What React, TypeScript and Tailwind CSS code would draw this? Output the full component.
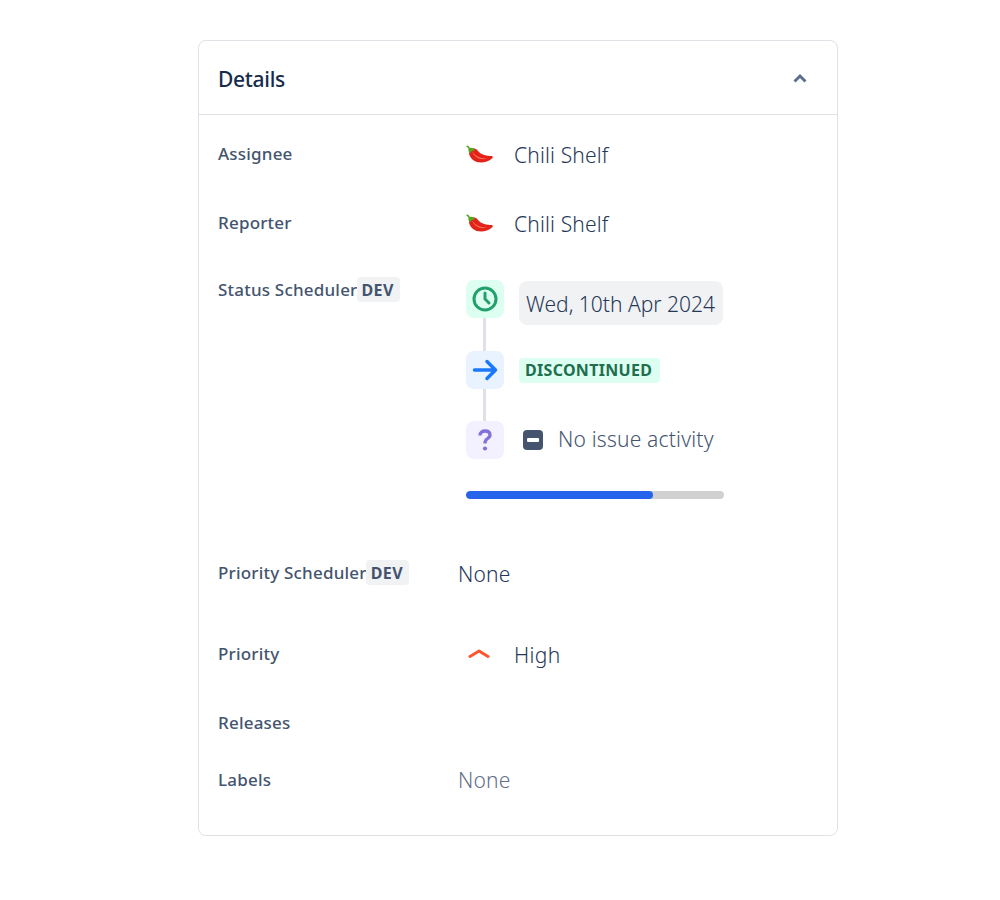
import React from "react";

const font = "font-['Noto_Sans',sans-serif]";

function Chili() {
  return (
    <svg width="30" height="24" viewBox="0 0 30 24" fill="none" className="-mt-[2px]">
      <path d="M5 8 C7 4 12 5 14 8 C17 12 23 13 28 13 C29 13.500 29 14.500 28 15.500 C23 20 14 21 9 17 C6 14.500 4.500 11 5 8 Z" fill="#e2231a" />
      <path d="M8 8 C10 12 15 15.500 23 15.500 C17 17.500 10 15 8 8 Z" fill="#fb6a50" />
      <path d="M2 3 L4 2.500 L6 5 C8 4.500 10 5.500 11 7.500 C9 7 7 8 6 10.500 C4.500 9 4 7 4.500 5.500 Z" fill="#5aa51f" />
    </svg>
  );
}

function Label({ children, dev }: { children: string; dev?: boolean }) {
  return (
    <div className="w-[240px] shrink-0 flex items-start text-[17px] leading-[24px] font-medium text-[#44546f] tracking-[0.2px]">
      <span>{children}</span>
      {dev && (
        <span className="bg-[#f1f2f4] rounded-[4px] pl-[5px] pr-[6px] h-[25px] -mt-[1px] -ml-[1px] flex items-center text-[16px] tracking-[0.4px] font-bold">
          DEV
        </span>
      )}
    </div>
  );
}

function IconBox({ bg, children }: { bg: string; children: React.ReactNode }) {
  return (
    <div className={`w-[38px] h-[38px] rounded-[8px] flex items-center justify-center shrink-0 ${bg}`}>
      {children}
    </div>
  );
}

function Person() {
  return (
    <div className="flex items-center h-[28px] pl-[6px] gap-[20px] text-[21px] font-light text-[#253858] tracking-[0.15px]">
      <Chili />
      <span>Chili Shelf</span>
    </div>
  );
}

export default function App() {
  return (
    <div className={`pt-10 pl-[198px] ${font}`}>
      <div className="w-[640px] h-[796px] border border-[#dfe1e6] rounded-[8px] bg-white">
        <div className="h-[74px] border-b border-[#dfe1e6] flex items-center justify-between pl-[19px] pr-[29px]">
          <h2 className="text-[21px] font-medium text-[#172b4d] tracking-[-0.3px] mt-[4px]">Details</h2>
          <svg width="16" height="16" viewBox="0 0 16 16" fill="none" className="mt-[3px]">
            <path d="M2.500 10.500 L8 5 L13.500 10.500" stroke="#5c6f8f" strokeWidth="3" />
          </svg>
        </div>

        <div className="pl-[19px]">
          <div className="flex pt-[27px] h-[69px]">
            <Label>Assignee</Label>
            <Person />
          </div>
          <div className="flex pt-[27px] h-[69px]">
            <Label>Reporter</Label>
            <Person />
          </div>

          <div className="flex pt-[25px] h-[307px]">
            <Label dev>Status Scheduler</Label>
            <div className="w-[266px] pl-[8px] pt-[2px]">
              <div className="flex items-center h-[38px]">
                <IconBox bg="bg-[#dcfff1]">
                  <svg width="28" height="28" viewBox="0 0 28 28" fill="none" stroke="#22a06b" strokeWidth="3" strokeLinecap="round">
                    <circle cx="14" cy="14" r="11" />
                    <path d="M14 8 V14 L18 18" />
                  </svg>
                </IconBox>
                <span className="ml-[15px] mt-[8px] h-[44px] flex items-center pt-[3px] pl-[7px] pr-[8px] rounded-[8px] bg-[#f1f2f4] text-[21px] font-light text-[#253858] whitespace-nowrap">
                  Wed, 10th Apr 2024
                </span>
              </div>
              <div className="w-[3px] h-[33px] bg-[#dfe1e6] ml-[17px]" />
              <div className="flex items-center h-[38px]">
                <IconBox bg="bg-[#e9f2ff]">
                  <svg width="26" height="26" viewBox="0 0 26 26" fill="none" stroke="#1a78fb" strokeWidth="3.500" strokeLinecap="round" strokeLinejoin="round">
                    <path d="M2.500 13 H23 M15 4.500 L23.500 13 L15 21.500" />
                  </svg>
                </IconBox>
                <span className="ml-[15px] h-[25px] flex items-center pl-[6px] pr-[8px] rounded-[4px] bg-[#dcfff1] text-[16px] font-bold text-[#216e4e] tracking-[0.3px]">
                  DISCONTINUED
                </span>
              </div>
              <div className="w-[3px] h-[32px] bg-[#dfe1e6] ml-[17px]" />
              <div className="flex items-center h-[38px]">
                <IconBox bg="bg-[#f3f0ff]">
                  <svg width="18" height="28" viewBox="0 0 18 28" fill="none">
                    <path d="M4 9.500 C4 6.500 6.500 5 9 5 C12 5 14 6.500 14 9 C14 11 12.500 12 11 13 C9.500 14 9 15 9 17.500" stroke="#8270db" strokeWidth="3.300" />
                    <circle cx="9" cy="22.500" r="2.100" fill="#8270db" />
                  </svg>
                </IconBox>
                <svg width="20" height="20" viewBox="0 0 20 20" className="ml-[19px] shrink-0">
                  <rect width="20" height="20" rx="4" fill="#44546f" />
                  <rect x="4" y="8" width="12" height="4" rx="1" fill="#fff" />
                </svg>
                <span className="ml-[15px] text-[21px] font-light text-[#44546f] tracking-[0.2px] whitespace-nowrap">No issue activity</span>
              </div>
              <div className="mt-[32px] w-[258px] h-[8px] rounded-full bg-[#d1d1d1] overflow-hidden">
                <div className="h-full w-[187px] rounded-full bg-[#2563eb]" />
              </div>
            </div>
          </div>

          <div className="flex pt-[1px] h-[82px]">
            <Label dev>Priority Scheduler</Label>
            <div className="text-[21px] font-light leading-[28px] text-[#253858] tracking-[0.2px] -mt-[1px]">None</div>
          </div>

          <div className="flex h-[69px]">
            <Label>Priority</Label>
            <div className="flex items-center h-[28px] pl-[10px] gap-[24px] text-[21px] font-light text-[#253858] tracking-[0.35px]">
              <svg width="22" height="14" viewBox="0 0 22 14" fill="none" className="-mt-[5px]">
                <path d="M2 9.500 L11 4 L20 9.500" stroke="#ff5630" strokeWidth="3" strokeLinecap="round" strokeLinejoin="round" />
              </svg>
              <span>High</span>
            </div>
          </div>

          <div className="flex h-[57px]">
            <Label>Releases</Label>
          </div>

          <div className="flex">
            <Label>Labels</Label>
            <div className="text-[21px] font-light leading-[28px] text-[#626f86] tracking-[0.2px] -mt-[2px]">None</div>
          </div>
        </div>
      </div>
    </div>
  );
}
